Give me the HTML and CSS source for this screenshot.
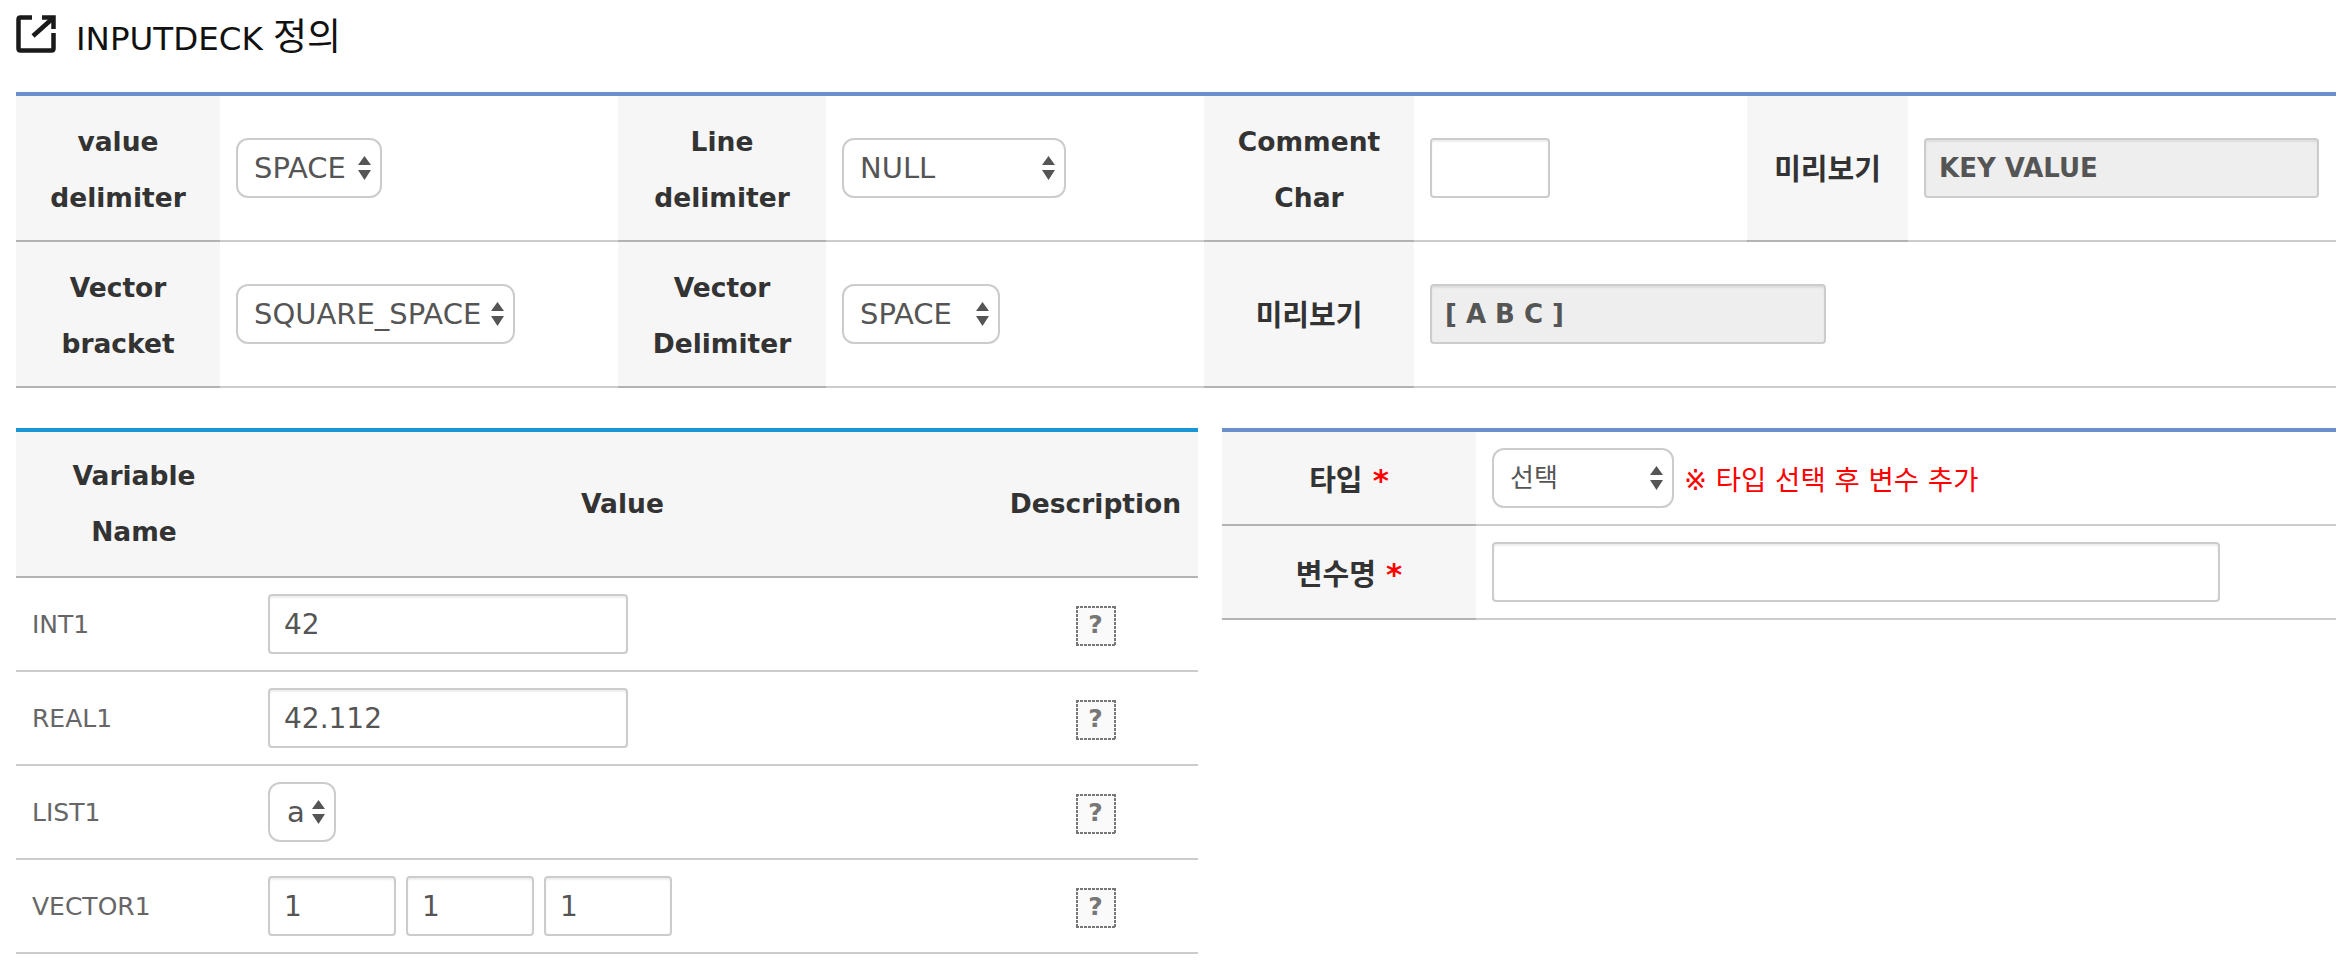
FILE: index.html
```html
<!DOCTYPE html>
<html lang="ko">
<head>
    <meta charset="UTF-8">
    <meta name="viewport" content="width=device-width, initial-scale=1.0">
    <title>INPUTDECK 정의</title>
    <link rel="stylesheet" href="styles.css">
</head>
<body>

    <div class="page">
        <h2 class="title">
            <svg class="title-icon" viewBox="0 0 40 38" fill="none" stroke="#1a1a1a" stroke-width="4.5">
                <path d="M16 2.5 H4.5 Q2.5 2.5 2.5 4.5 V33.5 Q2.5 35.5 4.5 35.5 H35.5 Q37.5 35.5 37.5 33.5 V18"/>
                <path d="M17 21 L36 4"/>
                <path d="M26 2.5 H37.5 V14"/>
            </svg>
            <span>INPUTDECK <span class="title-ko">정의</span></span>
        </h2>

        <table class="form-table">
            <colgroup>
                <col class="c-204">
                <col class="c-398">
                <col class="c-208">
                <col class="c-378">
                <col class="c-210">
                <col class="c-333">
                <col class="c-160">
                <col>
            </colgroup>
            <tr>
                <th>value<br>delimiter</th>
                <td><select class="w-146"><option>SPACE</option></select></td>
                <th>Line<br>delimiter</th>
                <td><select class="w-224"><option>NULL</option></select></td>
                <th>Comment<br>Char</th>
                <td><input type="text" class="w-120"></td>
                <th class="ko">미리보기</th>
                <td><input type="text" class="readonly w-395" value="KEY VALUE" readonly></td>
            </tr>
            <tr>
                <th>Vector<br>bracket</th>
                <td><select class="w-279"><option>SQUARE_SPACE</option></select></td>
                <th>Vector<br>Delimiter</th>
                <td><select class="w-158"><option>SPACE</option></select></td>
                <th class="ko">미리보기</th>
                <td colspan="3"><input type="text" class="readonly w-396" value="[ A B C ]" readonly></td>
            </tr>
        </table>

        <div class="columns">
            <table class="var-table">
                <colgroup>
                    <col class="c-236">
                    <col class="c-741">
                    <col>
                </colgroup>
                <tr>
                    <th>Variable<br>Name</th>
                    <th>Value</th>
                    <th>Description</th>
                </tr>
                <tr>
                    <td class="var-name">INT1</td>
                    <td><input type="text" class="w-360" value="42"></td>
                    <td class="center"><span class="help">?</span></td>
                </tr>
                <tr>
                    <td class="var-name">REAL1</td>
                    <td><input type="text" class="w-360" value="42.112"></td>
                    <td class="center"><span class="help">?</span></td>
                </tr>
                <tr>
                    <td class="var-name">LIST1</td>
                    <td><select class="w-68"><option>a</option></select></td>
                    <td class="center"><span class="help">?</span></td>
                </tr>
                <tr>
                    <td class="var-name">VECTOR1</td>
                    <td>
                        <div class="vector">
                            <input type="text" class="w-128" value="1">
                            <input type="text" class="w-128" value="1">
                            <input type="text" class="w-128" value="1">
                        </div>
                    </td>
                    <td class="center"><span class="help">?</span></td>
                </tr>
            </table>

            <table class="form-table add-table">
                <colgroup>
                    <col class="c-254">
                    <col>
                </colgroup>
                <tr>
                    <th class="ko">타입 <span class="req">*</span></th>
                    <td>
                        <div class="type-row">
                            <select class="w-182 sel-ko"><option>선택</option></select>
                            <span class="note">※ 타입 선택 후 변수 추가</span>
                        </div>
                    </td>
                </tr>
                <tr>
                    <th class="ko">변수명 <span class="req">*</span></th>
                    <td><input type="text" class="w-728"></td>
                </tr>
            </table>
        </div>
    </div>

</body>
</html>
```

FILE: styles.css
```css
* {
    box-sizing: border-box;
}

body {
    margin: 0;
    background: #fff;
    font-family: "DejaVu Sans", "Noto Sans CJK KR", sans-serif;
    color: #333;
}

.page {
    padding: 0 16px;
}

.title {
    display: flex;
    align-items: center;
    gap: 20px;
    height: 92px;
    margin: 0;
    padding-bottom: 24px;
    font-size: 32.5px;
    font-weight: normal;
    color: #111;
}

.title-ko {
    font-size: 37px;
}

.title-icon {
    width: 40px;
    height: 38px;
}

table {
    width: 100%;
    table-layout: fixed;
    border-collapse: separate;
    border-spacing: 0;
}

.form-table {
    border-top: 4px solid #6b8fc9;
}

.var-table {
    width: 1182px;
    flex: none;
    border-top: 4px solid #1b96d5;
}

.add-table {
    width: 1114px;
    flex: none;
    align-self: flex-start;
}

th, td {
    border-bottom: 2px solid #ccc;
    padding: 16px;
}

th {
    background: #f6f6f6;
    border-bottom-color: #b3b3b3;
    font-size: 26.5px;
    line-height: 56px;
    font-weight: bold;
    text-align: center;
    color: #333;
}

.form-table th {
    padding: 18px 16px 14px;
}

th.ko {
    font-size: 29px;
}

.req {
    font-size: 31px;
    color: #f00;
}

.columns {
    display: flex;
    justify-content: space-between;
    margin-top: 40px;
}

.var-name {
    font-size: 25px;
    color: #666;
}

.center {
    text-align: center;
}

input, select {
    display: block;
    height: 60px;
    border: 2px solid #ccc;
    background-color: #fff;
    font-family: inherit;
    color: #555;
    outline: none;
}

input {
    padding: 0 14px;
    border-radius: 4px;
    font-size: 28px;
    box-shadow: inset 0 2px 2px rgba(0, 0, 0, 0.07);
}

select {
    appearance: none;
    -webkit-appearance: none;
    padding: 0 28px 0 16px;
    border-radius: 12px;
    font-size: 29px;
    background-image: url("data:image/svg+xml,%3Csvg xmlns='http://www.w3.org/2000/svg' width='13' height='24'%3E%3Cpath d='M6.5 0 L13 9 H0 Z M6.5 24 L13 14 H0 Z' fill='%23555'/%3E%3C/svg%3E");
    background-repeat: no-repeat;
    background-position: right 9px center;
}

input.readonly {
    padding: 0 13px;
    background: #eee;
    font-size: 26px;
    font-weight: bold;
}

.sel-ko {
    font-size: 26px;
}

.vector {
    display: flex;
    gap: 10px;
}

.type-row {
    display: flex;
    align-items: center;
    gap: 10px;
}

.note {
    font-size: 27.5px;
    color: #f00;
}

.help {
    display: inline-block;
    width: 40px;
    height: 40px;
    margin-top: 3px;
    background-color: #fafafa;
    background-image:
        repeating-linear-gradient(90deg, #777 0 3px, transparent 3px 4px),
        repeating-linear-gradient(90deg, #777 0 3px, transparent 3px 4px),
        repeating-linear-gradient(180deg, #777 0 3px, transparent 3px 4px),
        repeating-linear-gradient(180deg, #777 0 3px, transparent 3px 4px);
    background-repeat: no-repeat;
    background-size: 100% 2px, 100% 2px, 2px 100%, 2px 100%;
    background-position: top, bottom, left, right;
    font-size: 25px;
    font-weight: bold;
    line-height: 38px;
    text-align: center;
    color: #777;
    vertical-align: middle;
}

.c-160 { width: 161px; }
.c-204 { width: 204px; }
.c-208 { width: 208px; }
.c-210 { width: 210px; }
.c-236 { width: 236px; }
.c-254 { width: 254px; }
.c-333 { width: 333px; }
.c-378 { width: 378px; }
.c-398 { width: 398px; }
.c-741 { width: 741px; }

.w-68 { width: 68px; padding-right: 0; padding-left: 17px; }
.w-120 { width: 120px; }
.w-128 { width: 128px; }
.w-146 { width: 146px; }
.w-158 { width: 158px; }
.w-182 { width: 182px; }
.w-224 { width: 224px; }
.w-279 { width: 279px; }
.w-360 { width: 360px; }
.w-395 { width: 395px; }
.w-396 { width: 396px; }
.w-728 { width: 728px; }
```
